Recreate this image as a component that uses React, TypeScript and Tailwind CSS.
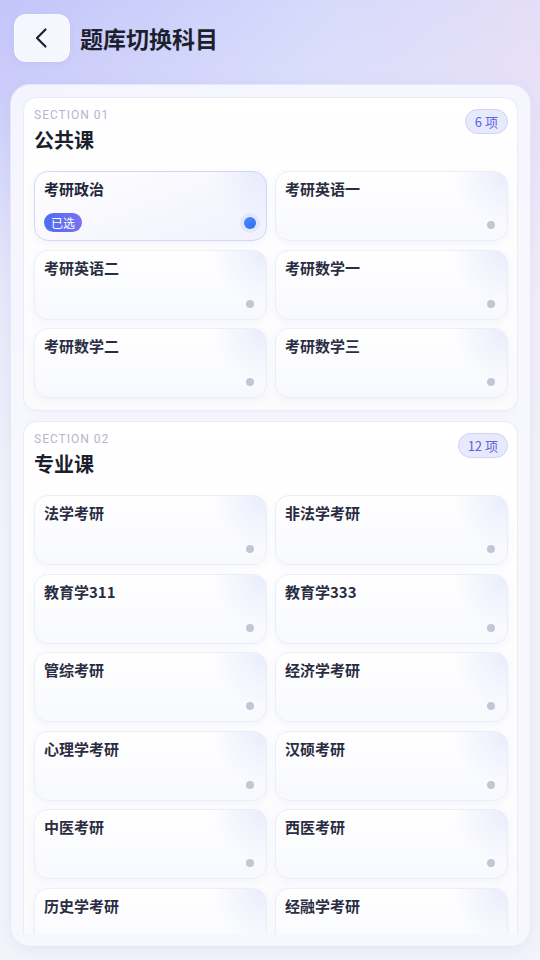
import React from 'react';

const font = { fontFamily: '"Noto Sans CJK SC", "Noto Sans", sans-serif' };

type Section = { no: string; title: string; items: string[] };

const sections: Section[] = [
  { no: '01', title: '公共课', items: ['考研政治', '考研英语一', '考研英语二', '考研数学一', '考研数学二', '考研数学三'] },
  {
    no: '02',
    title: '专业课',
    items: [
      '法学考研', '非法学考研', '教育学311', '教育学333', '管综考研', '经济学考研',
      '心理学考研', '汉硕考研', '中医考研', '西医考研', '历史学考研', '经融学考研',
    ],
  },
];

const SubjectCard = ({ name, selected }: { name: string; selected: boolean }) => {
  if (selected) {
    return (
      <div className="relative h-[70px] rounded-[14px] border border-[#d3d7f7] bg-[radial-gradient(circle_at_100%_0%,#e7eafc_0px,rgba(255,255,255,0)_55px),linear-gradient(160deg,#ffffff_0%,#f0f1fd_100%)] shadow-[0_2px_6px_rgba(120,130,200,0.08)] pl-[9px] pt-[6px]">
        <div className="text-[15px] leading-[22px] font-semibold text-[#22263a]">{name}</div>
        <div className="mt-[13px] inline-flex h-[19px] items-center rounded-full bg-[linear-gradient(90deg,#4d6df0,#7a70f2)] px-[7px] text-[12px] leading-none text-white">
          已选
        </div>
        <span className="absolute right-[10px] bottom-[11px] h-[12px] w-[12px] rounded-full bg-[linear-gradient(135deg,#4c8dfa,#2f6bf0)] ring-4 ring-[#e3e7fb]" />
      </div>
    );
  }
  return (
    <div className="relative h-[70px] rounded-[14px] border border-[#eceef7] bg-[radial-gradient(circle_at_100%_0%,#e8ebfc_0px,rgba(255,255,255,0)_55px),linear-gradient(180deg,#ffffff_0%,#f8f9fe_100%)] shadow-[0_2px_6px_rgba(120,130,200,0.07)] pl-[9px] pt-[6px]">
      <div className="text-[15px] leading-[22px] font-semibold text-[#2a2d42]">{name}</div>
      <span className="absolute right-[12px] bottom-[11px] h-[8px] w-[8px] rounded-full bg-[#c3c6d6]" />
    </div>
  );
};

const SectionCard = ({ section, first }: { section: Section; first: boolean }) => (
  <div className="rounded-[14px] border border-[#eaecf6] bg-[linear-gradient(180deg,#ffffff_0%,#fbfbfe_100%)] shadow-[0_2px_8px_rgba(120,130,200,0.06)] pl-[10px] pr-[9px] pt-[9px] pb-[12px]">
    <div className="flex items-start justify-between">
      <div>
        <div className="text-[12px] leading-[16px] tracking-[1px] text-[#b3b7ca]" style={{ fontFamily: 'Roboto, "Noto Sans", sans-serif' }}>
          SECTION {section.no}
        </div>
        <div className="mt-[3px] text-[20px] leading-[28px] font-bold text-[#1c1f2e]">{section.title}</div>
      </div>
      <div className="mt-[2px] flex h-[25px] items-center rounded-full border border-[#cfd3f5] bg-[#e8e9fb] px-[9px] text-[13px] text-[#5a64e2]">
        {section.items.length} 项
      </div>
    </div>
    <div className="mt-[17px] grid grid-cols-2 gap-x-[8px] gap-y-[8.5px]">
      {section.items.map((it, i) => (
        <SubjectCard key={it} name={it} selected={first && i === 0} />
      ))}
    </div>
  </div>
);

export default function App() {
  return (
    <div
      className="flex h-[960px] w-[540px] flex-col overflow-hidden bg-[linear-gradient(180deg,rgba(244,244,250,0)_0%,rgba(244,244,250,0.15)_9%,rgba(243,244,250,0.75)_30%,#f3f4fa_55%),linear-gradient(100deg,#c3c4fa_0%,#d6dafb_45%,#f0e0f4_100%)] pl-[10px] pr-[9px] pb-[13px]"
      style={font}
    >
      <div className="flex items-center gap-[10px] pt-[14px] pl-[4px]">
        <button className="flex h-[48px] w-[56px] items-center justify-center rounded-[12px] border border-white/60 bg-[#f5f6fe] shadow-[0_2px_6px_rgba(100,100,180,0.08)]">
          <svg width="24" height="24" viewBox="0 0 24 24" fill="none" stroke="#1c1f2e" strokeWidth="2.2" strokeLinecap="round" strokeLinejoin="round">
            <path d="M15.5 3.5 7 12l8.5 8.5" />
          </svg>
        </button>
        <div className="text-[23px] font-bold text-[#1c1f2e]">题库切换科目</div>
      </div>

      <div className="mt-[22px] flex min-h-0 flex-1 flex-col rounded-[20px] border border-[#e6e8f8] bg-[#f7f8fe]/90 p-[12px] shadow-[0_4px_16px_rgba(120,130,200,0.10)]">
        <div className="flex min-h-0 flex-1 flex-col gap-[10px] overflow-hidden">
          {sections.map((s, i) => (
            <SectionCard key={s.no} section={s} first={i === 0} />
          ))}
        </div>
      </div>
    </div>
  );
}
